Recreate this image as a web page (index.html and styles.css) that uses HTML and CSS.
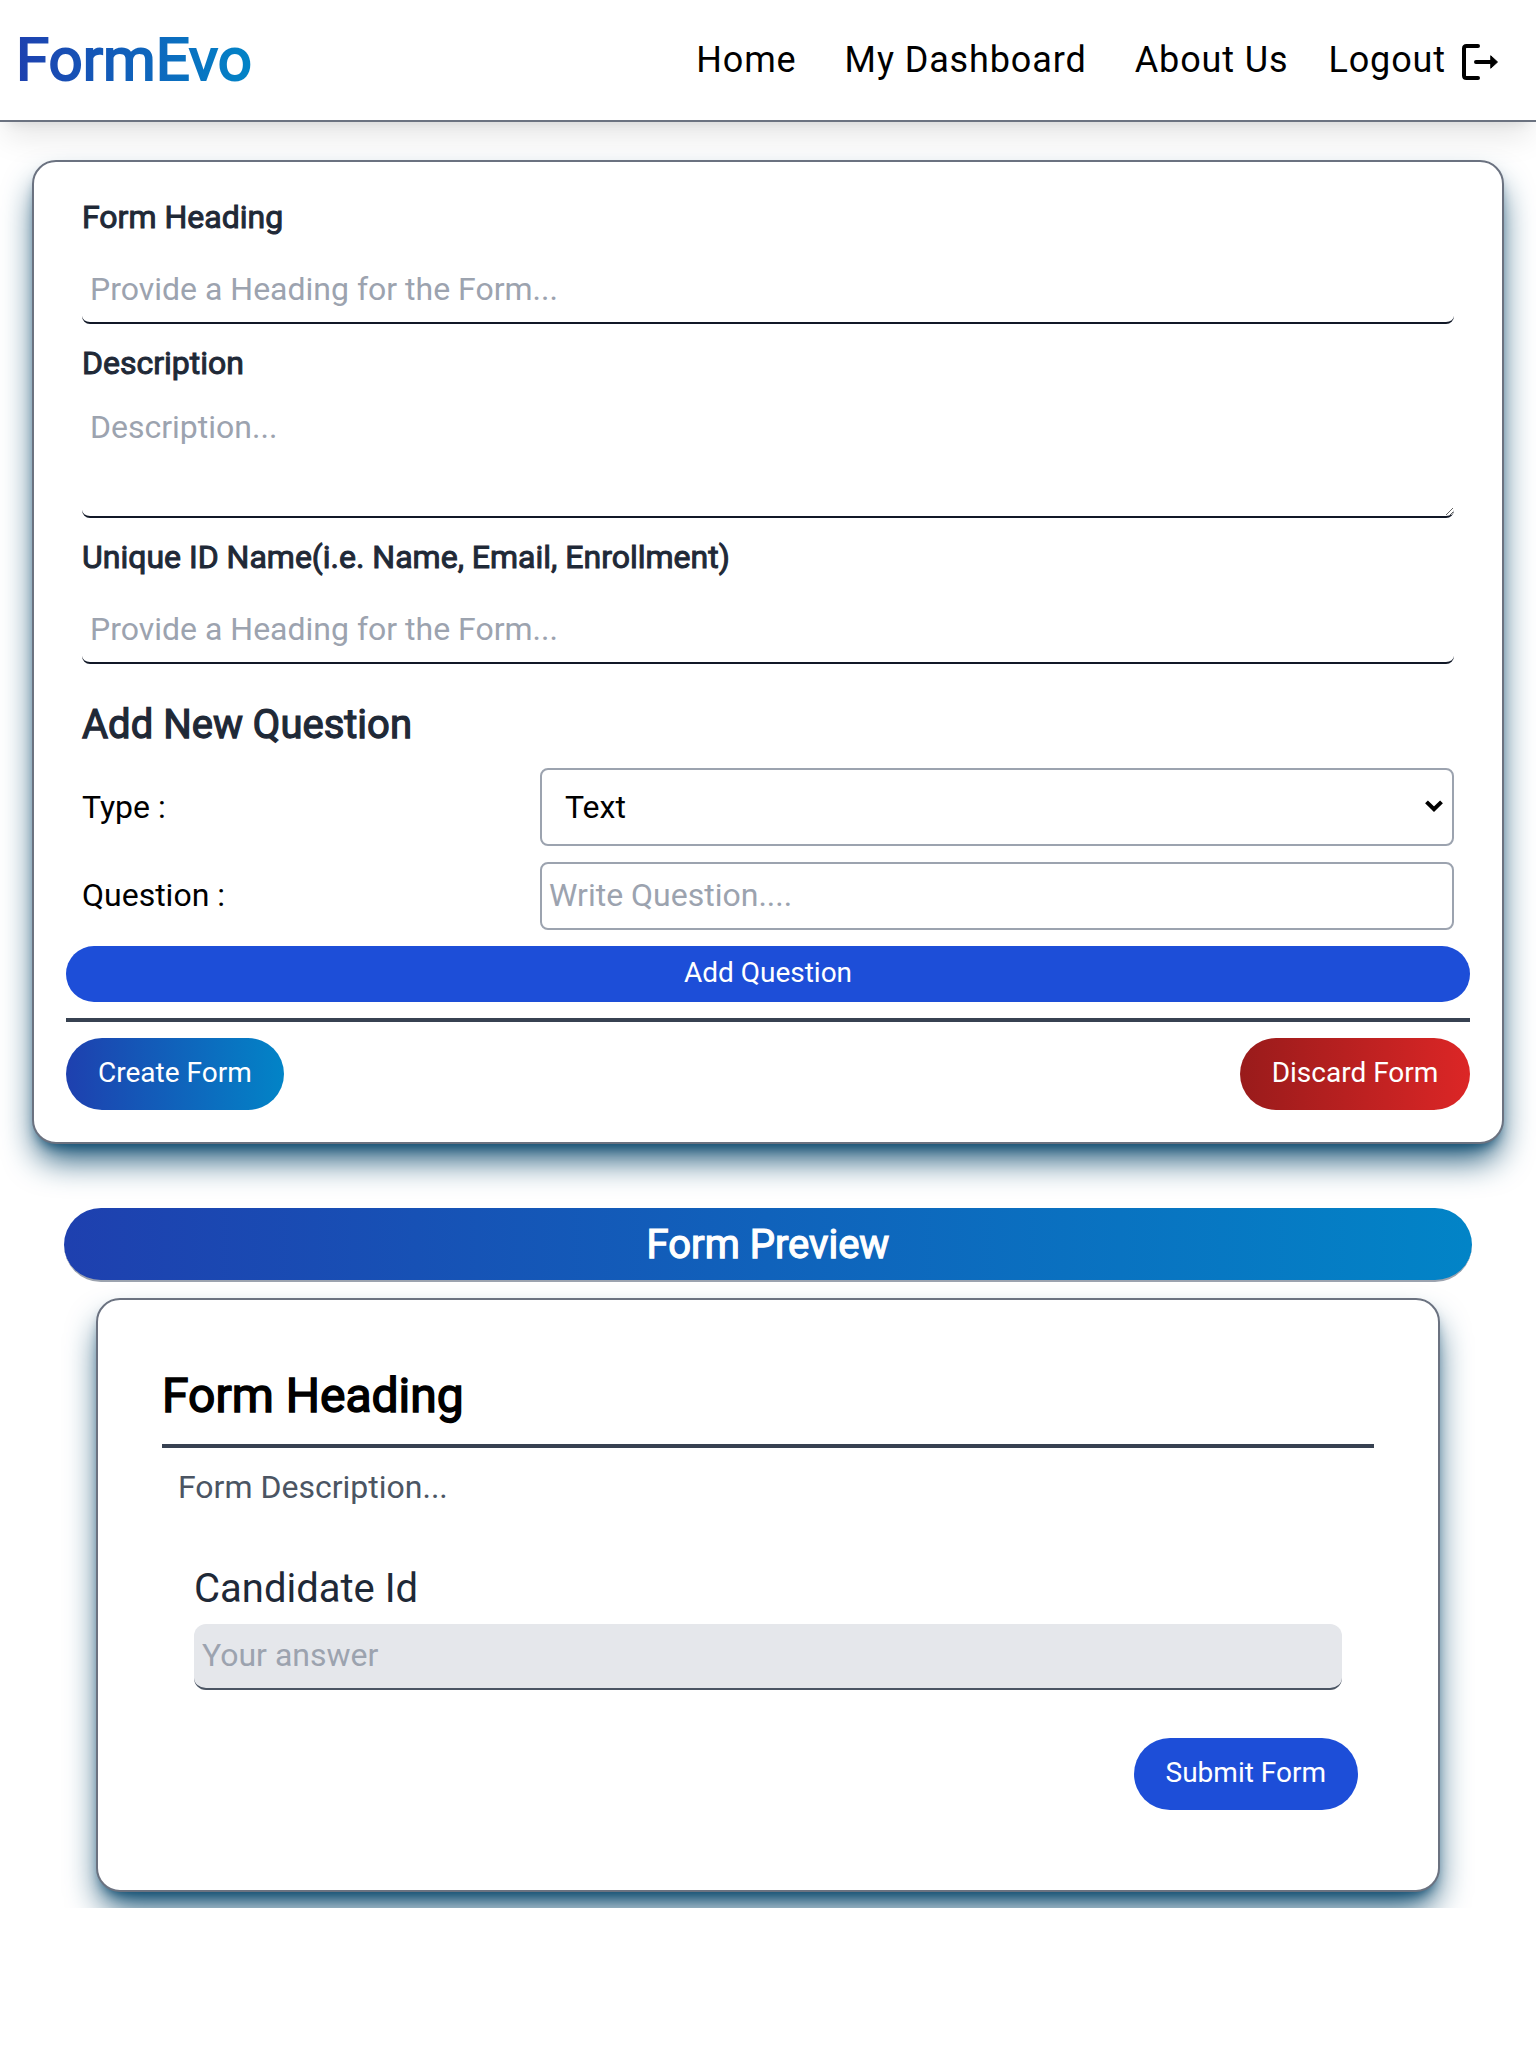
FILE: index.html
```html
<!DOCTYPE html>
<html lang="en">
<head>
<meta charset="utf-8">
<title>FormEvo</title>
<link rel="stylesheet" href="styles.css">
</head>
<body>
<header class="header">
  <div class="logo">FormEvo</div>
  <nav class="nav">
    <a class="nav-link">Home</a>
    <a class="nav-link">My Dashboard</a>
    <a class="nav-link">About Us</a>
    <a class="nav-link logout">Logout
      <svg class="logout-icon" viewBox="0 0 36 36" fill="none" stroke="#000" stroke-width="4" stroke-linecap="round" stroke-linejoin="round"><path d="M16 2H4.500Q2 2 2 4.500V31.500Q2 34 4.500 34H16M14 18H30"/><path d="M29 12L35.500 18L29 24Z" fill="#000" stroke-width="1"/></svg>
    </a>
  </nav>
</header>
<main class="main">
  <form class="card editor">
    <div class="fields">
      <label class="label">Form Heading</label>
      <input class="line-input" placeholder="Provide a Heading for the Form...">
      <label class="label">Description</label>
      <textarea class="line-input area" placeholder="Description..."></textarea>
      <label class="label">Unique ID Name(i.e. Name, Email, Enrollment)</label>
      <input class="line-input" placeholder="Provide a Heading for the Form...">
      <h2 class="section-title">Add New Question</h2>
      <div class="row">
        <span>Type :</span>
        <div class="select-wrap">
          <select class="select"><option>Text</option></select>
          <svg class="chevron" viewBox="0 0 18 12" fill="none" stroke="#000" stroke-width="4"><path d="M1.500 1.800L9 9.200L16.500 1.800"/></svg>
        </div>
      </div>
      <div class="row question-row">
        <span class="question-label">Question :</span>
        <input class="box-input" placeholder="Write Question....">
      </div>
    </div>
    <button type="button" class="btn btn-add">Add Question</button>
    <hr class="rule">
    <div class="actions">
      <button type="button" class="btn btn-create">Create Form</button>
      <button type="button" class="btn btn-discard">Discard Form</button>
    </div>
  </form>
  <h2 class="banner">Form Preview</h2>
  <section class="card preview">
    <h1 class="preview-title">Form Heading</h1>
    <hr class="rule">
    <p class="preview-desc">Form Description...</p>
    <div class="answer">
      <div class="answer-label">Candidate Id</div>
      <input class="answer-input" placeholder="Your answer">
    </div>
    <button type="button" class="btn btn-submit">Submit Form</button>
  </section>
</main>
</body>
</html>
```
FILE: styles.css
```css
* { box-sizing: border-box; margin: 0; padding: 0; }
body {
  background: #fff;
  color: #000;
  font: 400 32px/48px Roboto, "Liberation Sans", sans-serif;
}
input, textarea, select, button { font: inherit; color: inherit; border: 0; outline: 0; background: transparent; }
::placeholder { color: #9ca3af; opacity: 1; }

.header {
  display: flex;
  justify-content: space-between;
  align-items: center;
  height: 122px;
  padding: 0 38px 0 16px;
  border-bottom: 2px solid #6b7280;
  box-shadow: 0 20px 30px -6px rgba(0, 0, 0, .1), 0 8px 12px -8px rgba(0, 0, 0, .1);
}
.logo {
  font-size: 60px;
  line-height: 72px;
  color: transparent;
  background: linear-gradient(to right, #1e40af, #0284c7);
  -webkit-background-clip: text;
  background-clip: text;
  -webkit-text-stroke: 2px transparent;
}
.nav { display: flex; align-items: center; gap: 48px; }
.nav-link { font-size: 36px; line-height: 56px; letter-spacing: .88px; }
.logout { display: flex; align-items: center; gap: 16px; margin-left: -8px; }
.logout-icon { width: 36px; height: 36px; margin-top: 4px; }

.main { height: 1786px; padding: 38px 32px 0; overflow: hidden; }
.card {
  background: #fff;
  border: 2px solid #6b7280;
  border-radius: 24px;
  box-shadow: 0 20px 34px -6px #0c4a6e, 0 8px 13px -7px #0c4a6e;
}
.editor { padding: 32px; }
.fields { display: flex; flex-direction: column; padding: 0 16px; }
.label { height: 48px; line-height: 46px; color: #1f2937; -webkit-text-stroke: 1px #1f2937; }
.line-input {
  height: 66px;
  margin: 16px 0;
  padding: 7px 8px 9px;
  border-bottom: 2px solid #111827;
  border-radius: 8px;
}
.area { height: 122px; margin-top: 8px; resize: vertical; }
.section-title {
  margin: 16px 0;
  height: 56px;
  color: #1f2937;
  font-size: 40px;
  font-weight: 400;
  line-height: 58px;
  -webkit-text-stroke: 1.250px #1f2937;
}
.row { display: grid; grid-template-columns: 458px 1fr; align-items: center; }
.question-row { margin: 16px 0; }
.question-label { height: 48px; line-height: 46px; }
.select-wrap { position: relative; display: grid; }
.select {
  height: 78px;
  padding: 0 23px;
  border: 2px solid #9ca3af;
  border-radius: 8px;
  appearance: none;
}
.chevron { position: absolute; right: 11px; top: 32px; width: 18px; height: 12px; }
.box-input { height: 68px; padding: 7px 7px 9px; border: 2px solid #9ca3af; border-radius: 8px; }

.btn { padding: 15px 32px 17px; border-radius: 36px; color: #fff; font-size: 28px; line-height: 40px; }
.btn-add { display: block; width: 100%; padding: 7px 8px 9px; background: #1d4ed8; }
.rule { height: 4px; margin: 16px 0; border: 0; background: #374151; }
.actions { display: flex; justify-content: space-between; }
.btn-create { background: linear-gradient(to right, #1e40af, #0284c7); }
.btn-discard { width: 230px; padding-inline: 0; background: linear-gradient(to right, #991b1b, #dc2626); }

.banner {
  height: 74px;
  margin: 64px 32px 16px;
  padding: 9px 8px 7px;
  border-bottom: 2px solid #9ca3af;
  border-radius: 37px;
  background: linear-gradient(to right, #1e40af, #0284c7);
  color: #fff;
  font-size: 40px;
  font-weight: 400;
  line-height: 56px;
  text-align: center;
  -webkit-text-stroke: 1.250px #fff;
}
.preview { display: flex; flex-direction: column; height: 594px; margin: 0 64px; padding: 64px; }
.preview-title { font-size: 48px; font-weight: 400; line-height: 64px; -webkit-text-stroke: 1.500px #000; }
.preview-desc { height: 48px; padding: 0 16px; color: #4b5563; line-height: 46px; }
.answer { display: flex; flex-direction: column; gap: 8px; padding: 48px 32px; }
.answer-label { height: 56px; color: #1f2937; font-size: 40px; line-height: 58px; }
.answer-input {
  height: 66px;
  padding: 7px 8px 9px;
  border-bottom: 2px solid #4b5563;
  border-radius: 12px;
  background: #e5e7eb;
}
.btn-submit { align-self: flex-end; margin-right: 16px; background: #1d4ed8; }
```
